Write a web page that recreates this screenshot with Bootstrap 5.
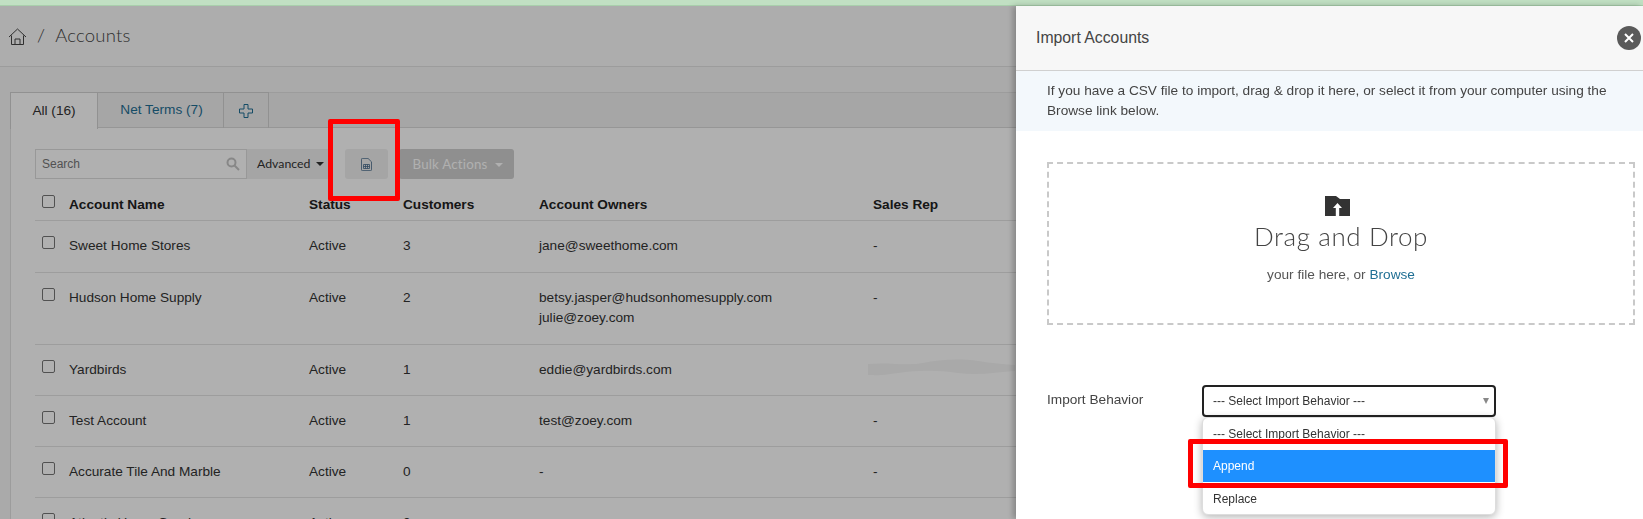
<!DOCTYPE html>
<html lang="en">
<head>
<meta charset="utf-8">
<title>Accounts</title>
<link href="https://cdn.jsdelivr.net/npm/bootstrap@5.3.0/dist/css/bootstrap.min.css" rel="stylesheet">
<style>
html,body{height:519px;overflow:hidden}
body{font-family:"Liberation Sans",Arial,sans-serif;font-size:13.65px;color:#333;background:#f7f7f7}
.top-strip-fill{height:6px;background:#c1e0c3;border-bottom:1px solid #a9cfac}
.crumb-bar{height:61px;background:#fbfbfb;border-bottom:1px solid #e3e3e3;padding-left:8px;gap:10px;font-family:Lato,sans-serif;font-weight:300;font-size:18.5px;letter-spacing:.2px;color:#444}
.tab-shell{margin:25px 0 0 10px;background:#f1f1f1;height:36px;border-top:1px solid #e2e2e2;border-bottom:1px solid #d9d9d9}
.tab-item{height:36px;margin-top:-1px;border:1px solid #d2d2d2;border-left:0;border-bottom:0;color:#1f6f94;display:flex;align-items:center;justify-content:center;white-space:nowrap}
.tab-item.is-on{width:88px;background:#fff;color:#333;border-left:1px solid #d2d2d2;height:37px;position:relative}
.tab-net{width:126px;padding-left:2px}
.tab-add{width:45px}
.work-card{margin-left:10px;background:#fff;height:392px;border-left:1px solid #e3e3e3;padding:21px 0 0 24px}
.tool-row{height:30px;gap:0}
.search-box{width:212px;height:30px;border:1px solid #dcdcdc;background:#fff;padding:0 6px;font-size:12px;color:#777;justify-content:space-between}
.adv-btn{width:86px;height:30px;background:#f0f0f0;font-family:Lato,sans-serif;font-size:12.3px;color:#333;padding-left:10px;gap:6px;border-radius:0 3px 3px 0}
.caret-dn{width:0;height:0;border-left:4px solid transparent;border-right:4px solid transparent;border-top:4px solid currentColor}
.doc-btn{width:43px;height:30px;margin-left:12px;background:#f0f0f0;border-radius:3px;border:0}
.bulk-btn{width:115px;height:30px;margin-left:11px;padding:1px 0 0 3px;background:#cfcfcf;border-radius:3px;font-family:Lato,sans-serif;font-size:13.3px;color:#fff;gap:8px;letter-spacing:.2px;border:0}
.acct-table{table-layout:fixed;width:1200px;margin:0;color:#333;font-size:13.65px}
.acct-table th,.acct-table td{padding:0;border-bottom:1px solid #e4e4e4;vertical-align:top;background:transparent;color:#333}
.acct-table th{height:41px;font-weight:700;padding-top:16px;color:#222}
.acct-table td{padding-top:15px;line-height:20px}
.acct-table .rh-a{height:52px}
.acct-table .rh-b{height:72px}
.acct-table .rh-c{height:51px}
.box-tick{display:block;width:13px;height:13px;border:1px solid #767676;border-radius:2px;background:#fff;margin:0 0 0 7px}
.scribble-mark{position:absolute;left:868px;top:358px;width:147px;height:20px;fill:#f5f5f5}
.dim-layer{position:fixed;inset:6px 0 0 0;background:rgba(0,0,0,.31);z-index:10}
.import-panel{position:fixed;left:1016px;top:6px;width:627px;height:513px;background:#fff;z-index:20;box-shadow:-3px 0 6px rgba(0,0,0,.25)}
.panel-head{height:65px;background:#f7f7f7;border-bottom:1px solid #d0d0d0;padding-left:20px;font-size:15.8px;position:relative;color:#444}
.close-dot{position:absolute;right:2px;top:20px;width:24px;height:24px;border-radius:50%;background:#5a5a5a;border:0;padding:0;color:#fff}
.panel-note{height:60px;background:#f3f8fc;padding:10px 26px 0 31px;line-height:20px;color:#444}
.drop-zone{margin:31px 8px 0 31px;height:163px;border:2px dashed #c9c9c9;text-align:center;padding-top:32px}
.drop-icon{display:block;margin:0 auto;position:relative;right:4px}
.drop-title{font-family:Lato,sans-serif;font-weight:300;font-size:26px;line-height:32px;color:#444;margin-top:4px;letter-spacing:.6px}
.drop-sub{margin-top:13px;color:#555;font-size:13.65px}
.drop-sub a{color:#1f6f94;text-decoration:none}
.behave-row{margin:60px 0 0 31px;position:relative}
.behave-label{width:155px;padding-top:5px;color:#444;line-height:20px}
.fake-select{width:294px;height:32px;border:2px solid #222;border-radius:4px;font-size:12px;padding-left:9px;color:#333;justify-content:space-between;padding-right:5px}
.arrow-mini{width:0;height:0;border-left:3px solid transparent;border-right:3px solid transparent;border-top:6px solid #888}
.choice-list{position:absolute;left:155px;top:32px;width:294px;height:98px;background:#fff;border:1px solid #ddd;border-radius:6px;box-shadow:0 2px 8px rgba(0,0,0,.3);font-size:12px;overflow:hidden}
.choice-item{height:32px;padding-left:10px;display:flex;align-items:center;color:#333}
.choice-item.is-hot{background:#1e90ff;color:#fff;margin-bottom:1px}
.red-frame{position:fixed;border:5px solid #f00;border-radius:2px;z-index:40}
.frame-one{left:328px;top:119px;width:72px;height:82px}
.frame-two{left:1188px;top:439px;width:320px;height:49px}
</style>
</head>
<body>
<div class="top-strip-fill"></div>
<header class="crumb-bar d-flex align-items-center">
  <svg width="19" height="19" viewBox="0 0 19 19" fill="none" stroke="#444" stroke-width="1"><path d="M1 10 9.5 2 18 10M3.5 8.5V17.5H15.5V8.5M7 17.5V12H12V17.5"/></svg>
  <span>/</span><span>Accounts</span>
</header>
<div class="tab-shell d-flex">
  <div class="tab-item is-on">All (16)</div>
  <div class="tab-item tab-net">Net Terms (7)</div>
  <div class="tab-item tab-add">
    <svg width="14" height="14" viewBox="0 0 14 14" fill="none" stroke="#1f6f94" stroke-width="1"><path d="M5 .5H9V5H13.5V9H9V13.5H5V9H.5V5H5Z"/></svg>
  </div>
</div>
<main class="work-card">
  <div class="tool-row d-flex">
    <div class="search-box d-flex align-items-center"><span>Search</span>
      <svg width="14" height="14" viewBox="0 0 14 14" fill="none" stroke="#c4c4c4" stroke-width="2"><circle cx="5.5" cy="5.5" r="4"/><path d="M8.5 8.5 13 13"/></svg>
    </div>
    <div class="adv-btn d-flex align-items-center">Advanced <span class="caret-dn"></span></div>
    <button class="doc-btn d-flex align-items-center justify-content-center" type="button" aria-label="Export">
      <svg width="11" height="13" viewBox="0 0 11 13" fill="none" stroke="#46698a" stroke-width=".8"><path d="M.5 1.2a.8.8 0 0 1 .8-.8H7L10.5 3.8v8a.8.8 0 0 1-.8.8H1.300a.8.8 0 0 1-.8-.8Z"/><path d="M2.500 6.500h6v4h-6ZM2.500 8.500h6M4.500 6.500v4M6.500 6.500v4"/></svg>
    </button>
    <button class="bulk-btn d-flex align-items-center justify-content-center" type="button">Bulk Actions <span class="caret-dn"></span></button>
  </div>
  <table class="table acct-table">
    <colgroup><col style="width:34px"><col style="width:240px"><col style="width:94px"><col style="width:136px"><col style="width:334px"><col></colgroup>
    <thead><tr><th><span class="box-tick"></span></th><th>Account Name</th><th>Status</th><th>Customers</th><th>Account Owners</th><th>Sales Rep</th></tr></thead>
    <tbody>
      <tr class="rh-a"><td><span class="box-tick"></span></td><td>Sweet Home Stores</td><td>Active</td><td>3</td><td>jane@sweethome.com</td><td>-</td></tr>
      <tr class="rh-b"><td><span class="box-tick"></span></td><td>Hudson Home Supply</td><td>Active</td><td>2</td><td>betsy.jasper@hudsonhomesupply.com<br>julie@zoey.com</td><td>-</td></tr>
      <tr class="rh-c"><td><span class="box-tick"></span></td><td>Yardbirds</td><td>Active</td><td>1</td><td>eddie@yardbirds.com</td><td></td></tr>
      <tr class="rh-c"><td><span class="box-tick"></span></td><td>Test Account</td><td>Active</td><td>1</td><td>test@zoey.com</td><td>-</td></tr>
      <tr class="rh-c"><td><span class="box-tick"></span></td><td>Accurate Tile And Marble</td><td>Active</td><td>0</td><td>-</td><td>-</td></tr>
      <tr class="rh-c"><td><span class="box-tick"></span></td><td>Atlantic Home Goods</td><td>Active</td><td>0</td><td>-</td><td>-</td></tr>
    </tbody>
  </table>
</main>
<svg class="scribble-mark" viewBox="0 0 147 20"><path d="M0 6C20 4 40 8 55 5S90 0 110 3 135 6 147 7V13C130 14 110 18 90 15S50 12 30 15 10 17 0 17Z"/></svg>
<div class="dim-layer"></div>
<aside class="import-panel">
  <div class="panel-head d-flex align-items-center">
    <span>Import Accounts</span>
    <button class="close-dot d-flex align-items-center justify-content-center" type="button" aria-label="Close">
      <svg width="10" height="10" viewBox="0 0 10 10" stroke="#fff" stroke-width="2"><path d="M1 1 9 9M9 1 1 9"/></svg>
    </button>
  </div>
  <div class="panel-note">If you have a CSV file to import, drag &amp; drop it here, or select it from your computer using the Browse link below.</div>
  <div class="drop-zone">
    <svg class="drop-icon" width="25" height="20" viewBox="0 0 25 20"><path fill="#333" d="M0 0H11L15 3H25V20H0Z"/><path fill="#fff" d="M12.5 7 17 12H14.200V20H10.800V12H8Z"/></svg>
    <div class="drop-title">Drag and Drop</div>
    <div class="drop-sub">your file here, or <a href="#">Browse</a></div>
  </div>
  <div class="behave-row d-flex">
    <div class="behave-label">Import Behavior</div>
    <div class="fake-select d-flex align-items-center"><span>--- Select Import Behavior ---</span><span class="arrow-mini"></span></div>
    <div class="choice-list">
      <div class="choice-item">--- Select Import Behavior ---</div>
      <div class="choice-item is-hot">Append</div>
      <div class="choice-item">Replace</div>
    </div>
  </div>
</aside>
<div class="red-frame frame-one"></div>
<div class="red-frame frame-two"></div>
<script src="https://cdn.jsdelivr.net/npm/bootstrap@5.3.0/dist/js/bootstrap.bundle.min.js"></script>
</body>
</html>
